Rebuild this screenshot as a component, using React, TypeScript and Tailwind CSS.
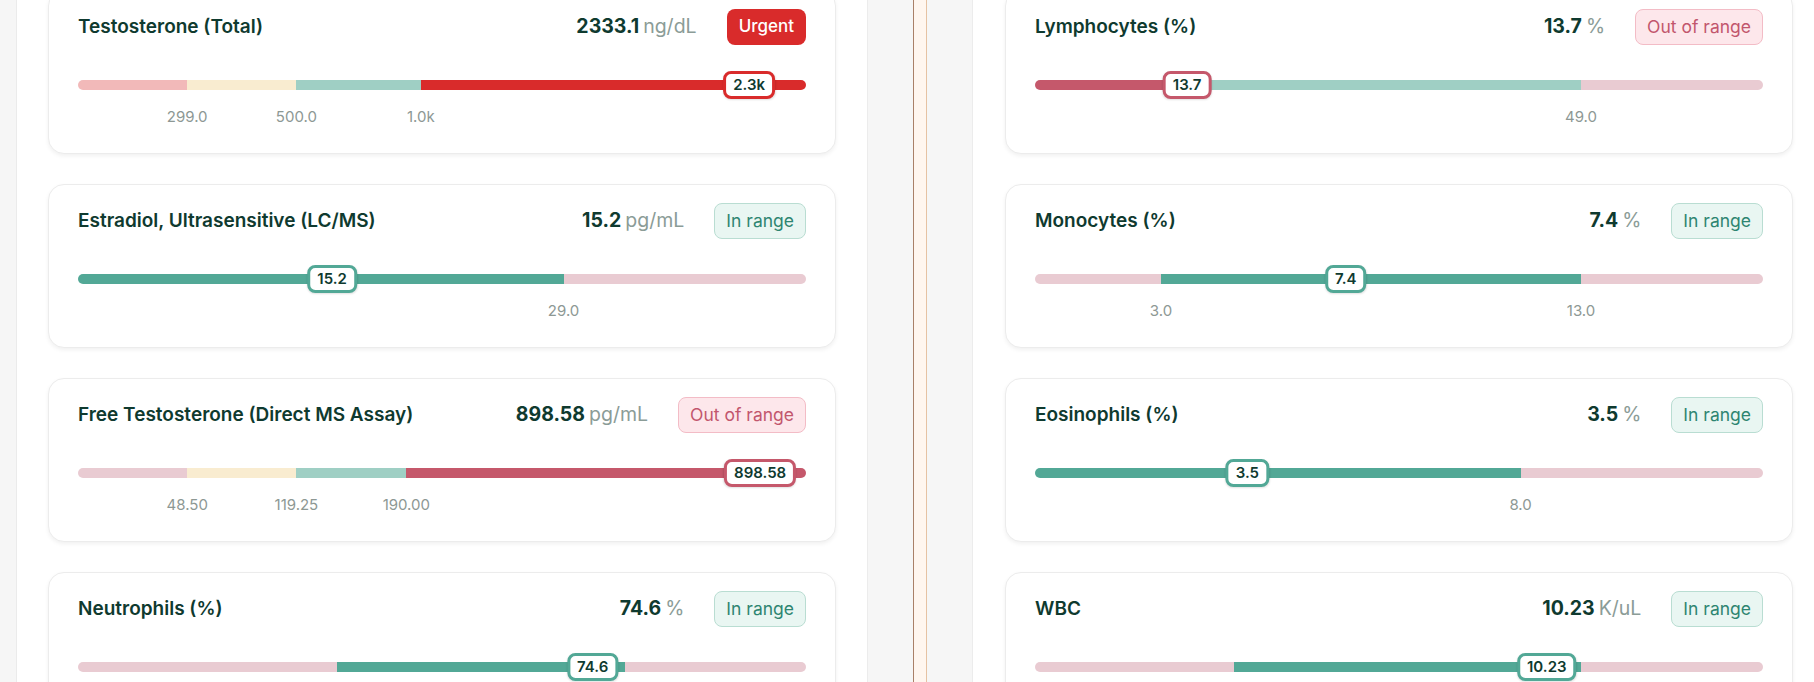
import type { CSSProperties } from 'react';

type Seg = { to: number; color: string };
type Tick = { at: number; label: string };
type Status = 'urgent' | 'out' | 'in';

type Marker = {
  name: string;
  value: string;
  unit: string;
  status: Status;
  segs: Seg[];
  pos: number;
  tag: string;
  tagColor: string;
  ticks: Tick[];
};

// bar colours
const PINK = '#e9cbd2';
const SALMON = '#f2b9b9';
const CREAM = '#f9ecd0';
const MINT = '#9fcfc4';
const TEAL = '#52a896';
const ROSE = '#c5586b';
const RED = '#d92b2b';

const LEFT: Marker[] = [
  {
    name: 'Testosterone (Total)', value: '2333.1', unit: 'ng/dL', status: 'urgent',
    segs: [{ to: 0.15, color: SALMON }, { to: 0.3, color: CREAM }, { to: 0.471, color: MINT }, { to: 1, color: RED }],
    pos: 0.922, tag: '2.3k', tagColor: RED,
    ticks: [{ at: 0.15, label: '299.0' }, { at: 0.3, label: '500.0' }, { at: 0.471, label: '1.0k' }],
  },
  {
    name: 'Estradiol, Ultrasensitive (LC/MS)', value: '15.2', unit: 'pg/mL', status: 'in',
    segs: [{ to: 0.667, color: TEAL }, { to: 1, color: PINK }],
    pos: 0.349, tag: '15.2', tagColor: TEAL,
    ticks: [{ at: 0.667, label: '29.0' }],
  },
  {
    name: 'Free Testosterone (Direct MS Assay)', value: '898.58', unit: 'pg/mL', status: 'out',
    segs: [{ to: 0.15, color: PINK }, { to: 0.3, color: CREAM }, { to: 0.451, color: MINT }, { to: 1, color: ROSE }],
    pos: 0.937, tag: '898.58', tagColor: ROSE,
    ticks: [{ at: 0.15, label: '48.50' }, { at: 0.3, label: '119.25' }, { at: 0.451, label: '190.00' }],
  },
  {
    name: 'Neutrophils (%)', value: '74.6', unit: '%', status: 'in',
    segs: [{ to: 0.356, color: PINK }, { to: 0.752, color: TEAL }, { to: 1, color: PINK }],
    pos: 0.707, tag: '74.6', tagColor: TEAL,
    ticks: [{ at: 0.356, label: '38.0' }, { at: 0.752, label: '80.0' }],
  },
];

const RIGHT: Marker[] = [
  {
    name: 'Lymphocytes (%)', value: '13.7', unit: '%', status: 'out',
    segs: [{ to: 0.23, color: ROSE }, { to: 0.75, color: MINT }, { to: 1, color: PINK }],
    pos: 0.209, tag: '13.7', tagColor: ROSE,
    ticks: [{ at: 0.75, label: '49.0' }],
  },
  {
    name: 'Monocytes (%)', value: '7.4', unit: '%', status: 'in',
    segs: [{ to: 0.173, color: PINK }, { to: 0.75, color: TEAL }, { to: 1, color: PINK }],
    pos: 0.427, tag: '7.4', tagColor: TEAL,
    ticks: [{ at: 0.173, label: '3.0' }, { at: 0.75, label: '13.0' }],
  },
  {
    name: 'Eosinophils (%)', value: '3.5', unit: '%', status: 'in',
    segs: [{ to: 0.667, color: TEAL }, { to: 1, color: PINK }],
    pos: 0.2917, tag: '3.5', tagColor: TEAL,
    ticks: [{ at: 0.667, label: '8.0' }],
  },
  {
    name: 'WBC', value: '10.23', unit: 'K/uL', status: 'in',
    segs: [{ to: 0.273, color: PINK }, { to: 0.75, color: TEAL }, { to: 1, color: PINK }],
    pos: 0.703, tag: '10.23', tagColor: TEAL,
    ticks: [{ at: 0.273, label: '3.8' }, { at: 0.75, label: '10.8' }],
  },
];

function Badge({ status }: { status: Status }) {
  if (status === 'urgent')
    return (
      <span className="h-9 px-[12px] inline-flex items-center rounded-lg bg-[#d92b2b] text-white text-[17px] font-medium">
        Urgent
      </span>
    );
  if (status === 'out')
    return (
      <span className="h-9 px-[11px] inline-flex items-center rounded-lg bg-[#fde7eb] border border-[#f3bcc6] text-[#c2566d] text-[17.5px]">
        Out of range
      </span>
    );
  return (
    <span className="h-9 px-[11px] inline-flex items-center rounded-lg bg-[#e9f6f2] border border-[#b9ddd2] text-[#2e8571] text-[17.5px]">
      In range
    </span>
  );
}

function RangeBar({ m }: { m: Marker }) {
  let prev = 0;
  return (
    <>
      <div className="relative h-7 mt-[26px]">
        <div className="absolute left-0 right-0 top-[9px] h-[10px] rounded-full overflow-hidden flex">
          {m.segs.map((s, i) => {
            const w = s.to - prev;
            prev = s.to;
            return <div key={i} className="h-full" style={{ width: `${w * 100}%`, background: s.color }} />;
          })}
        </div>
        <div
          className="absolute top-0 h-7 -translate-x-1/2 px-[7px] flex items-center rounded-lg border-[3px] bg-white text-[15px] font-semibold text-[#0f3a2f] shadow-[0_1px_2px_rgba(0,0,0,0.12)]"
          style={{ left: `${m.pos * 100}%`, borderColor: m.tagColor } as CSSProperties}
        >
          {m.tag}
        </div>
      </div>
      <div className="relative h-4 mt-[10px]">
        {m.ticks.map((t) => (
          <span
            key={t.label}
            className="absolute top-0 -translate-x-1/2 text-[15px] leading-4 text-[#8d9894]"
            style={{ left: `${t.at * 100}%` }}
          >
            {t.label}
          </span>
        ))}
      </div>
    </>
  );
}

function Card({ m }: { m: Marker }) {
  return (
    <div className="w-[788px] shrink-0 rounded-2xl border border-[#ececec] bg-white px-[29px] pt-[18px] pb-[28px] shadow-[0_2px_4px_rgba(0,0,0,0.06)]">
      <div className="h-9 flex items-center">
        <div className="flex-1 text-[19px] font-semibold text-[#0f3a2f]">{m.name}</div>
        <div className="text-[19.5px]">
          <span className="font-bold text-[#0f3a2f]">{m.value}</span>
          <span className="ml-1 text-[#8b9c97]">{m.unit}</span>
        </div>
        <div className="ml-[30px]">
          <Badge status={m.status} />
        </div>
      </div>
      <RangeBar m={m} />
    </div>
  );
}

export default function App() {
  return (
    <div
      className="h-[682px] w-full flex overflow-hidden bg-[#f6f6f6]"
      style={{ fontFamily: 'Inter, "Noto Sans", sans-serif' }}
    >
      <div className="w-[16px] shrink-0" />
      <div className="w-[851px] shrink-0 bg-white border-l border-[#ebebeb] px-[31px]">
        <div className="-mt-[10px] flex flex-col gap-[30px]">
          {LEFT.map((m) => (
            <Card key={m.name} m={m} />
          ))}
        </div>
      </div>
      <div className="w-[105px] shrink-0 flex border-l border-[#ececec]">
        <div className="w-[45px] shrink-0" />
        <div className="w-[14px] shrink-0 bg-[#fff6ef] border-l border-[#a98068] border-r border-r-[#e6c2a3]" />
        <div className="flex-1" />
      </div>
      <div className="flex-1 bg-white border-l border-[#ececec] pl-[32px]">
        <div className="-mt-[10px] flex flex-col gap-[30px]">
          {RIGHT.map((m) => (
            <Card key={m.name} m={m} />
          ))}
        </div>
      </div>
    </div>
  );
}
